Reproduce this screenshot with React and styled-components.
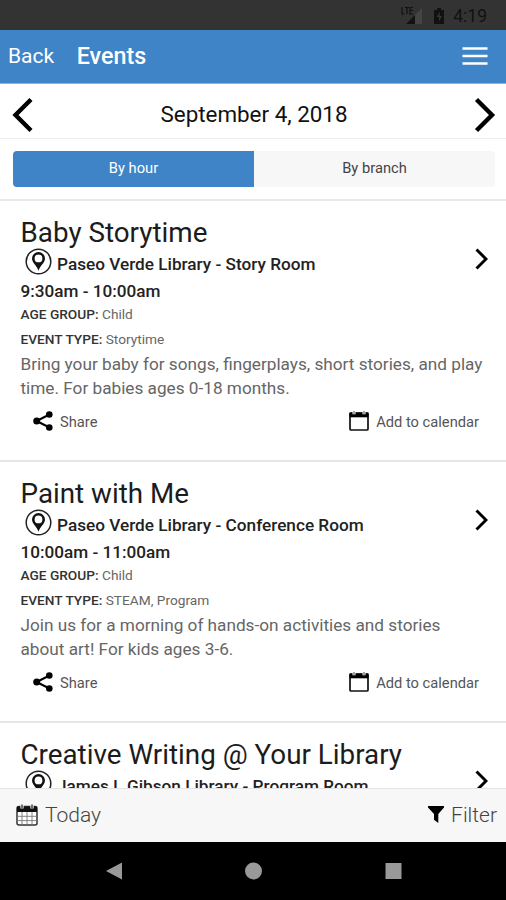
import React from "react";
import styled, { createGlobalStyle } from "styled-components";

const GlobalStyle = createGlobalStyle`
  * { box-sizing: border-box; }
  body { margin: 0; background: #fff; font-family: Roboto, "Liberation Sans", sans-serif; }
  svg { display: block; flex: none; }
  button { font: inherit; color: inherit; border: 0; background: none; padding: 0; }
`;

const Screen = styled.div`
  display: flex;
  flex-direction: column;
  width: 506px;
  height: 900px;
  overflow: hidden;
  background: #fff;
`;

const StatusBar = styled.div`
  flex: none;
  display: flex;
  align-items: center;
  justify-content: flex-end;
  height: 30px;
  padding: 2px 19px 0 0;
  background: #333;
  color: #111;
`;

const BatterySlot = styled.div`
  margin-left: 9px;
`;

const Clock = styled.span`
  margin-left: 8px;
  font-size: 17.5px;
  line-height: 28px;
`;

const Header = styled.header`
  flex: none;
  display: flex;
  align-items: center;
  height: 54px;
  padding: 1px 18px 2px 8px;
  background: #3f84c7;
  border-bottom: 1px solid #8fb5dd;
  color: #fff;
`;

const BackButton = styled.button`
  font-size: 21px;
  line-height: 26px;
`;

const PageTitle = styled.h1`
  flex: 1;
  margin: 0 0 0 22.5px;
  font-size: 23.3px;
  line-height: 26px;
  font-weight: 500;
`;

const DateBar = styled.div`
  flex: none;
  display: flex;
  align-items: center;
  justify-content: space-between;
  height: 55px;
  padding: 7px 10px 0 12px;
  border-bottom: 1px solid #ededed;
`;

const CurrentDate = styled.div`
  padding-bottom: 2px;
  font-size: 22.4px;
  line-height: 30px;
  color: #111;
`;

const SegmentBar = styled.div`
  flex: none;
  height: 62px;
  padding: 12px 11px 0 13px;
  border-bottom: 2px solid #e9e9e9;
`;

const Segments = styled.div`
  display: grid;
  grid-template-columns: 241px 241px;
  height: 36px;
  border-radius: 4px;
  overflow: hidden;
`;

const Segment = styled.button`
  font-size: 14.7px;
  line-height: 34px;
  padding-bottom: 2px;
  background: ${(p) => (p.$active ? "#3f84c7" : "#f7f7f7")};
  color: ${(p) => (p.$active ? "#fff" : "#444")};
`;

const EventList = styled.main`
  flex: 1;
  min-height: 0;
  overflow: hidden;
`;

const Card = styled.article`
  display: flex;
  flex-direction: column;
  height: 261px;
  padding: 15px 18px 0 20.5px;
  border-bottom: 2px solid #e6e6e6;
`;

const CardMain = styled.div`
  display: flex;
  align-items: flex-start;
  justify-content: space-between;
  height: 86px;
`;

const ChevronSlot = styled.div`
  padding-top: 31px;
`;

const EventTitle = styled.h2`
  margin: 0;
  font-size: 27.8px;
  line-height: 33px;
  font-weight: 400;
  color: #1c1c1c;
  white-space: nowrap;
`;

const Location = styled.div`
  display: flex;
  align-items: center;
  gap: 5.5px;
  height: 24px;
  padding-left: 4px;
  font-size: 17.2px;
  font-weight: 500;
  color: #222;
  white-space: nowrap;
`;

const LocationName = styled.span`
  padding-top: 5px;
`;

const Time = styled.div`
  font-size: 17.15px;
  line-height: 37px;
  font-weight: 500;
  color: #222;
`;

const Meta = styled.div`
  font-size: 13.7px;
  line-height: 24.5px;
  color: #666;
`;

const MetaLabel = styled.span`
  font-weight: 500;
  color: #333;
`;

const Description = styled.p`
  margin: 0;
  padding-top: 0.5px;
  font-size: 17.2px;
  line-height: 24.5px;
  color: #666;
  white-space: pre-line;
`;

const Actions = styled.div`
  display: flex;
  align-items: center;
  justify-content: space-between;
  height: 24px;
  margin-top: 8px;
  padding: 0 9px 0 12px;
`;

const Action = styled.button`
  display: flex;
  align-items: center;
  gap: 7.5px;
  font-size: 14.7px;
  line-height: 24px;
  color: #555;
`;

const ActionLabel = styled.span`
  padding-top: 3px;
`;

const Toolbar = styled.footer`
  flex: none;
  display: flex;
  align-items: center;
  justify-content: space-between;
  height: 54px;
  padding: 0 9px 2px 16px;
  background: #f7f7f7;
  border-top: 1px solid #e4e4e4;
`;

const ToolbarButton = styled.button`
  display: flex;
  align-items: center;
  gap: 7px;
  font-size: 21px;
  line-height: 28px;
  font-weight: 300;
  color: #444;
`;

const NavBar = styled.nav`
  flex: none;
  display: flex;
  align-items: center;
  justify-content: space-between;
  height: 58px;
  padding: 0 104.5px;
  background: #000;
`;

const SignalIcon = () => (
  <svg width="24" height="20" viewBox="0 0 24 20">
    <path d="M22 2v16H6z" fill="#444" />
    <path d="M15 9v9H6z" fill="#111" />
    <path d="M2 1v7h2.500M5 1.500h4M7 1.500V8M13 1.500h-3V8h3M10 4.500h3" fill="none" stroke="#111" strokeWidth="1.200" />
  </svg>
);

const BatteryIcon = () => (
  <svg width="12" height="18" viewBox="0 0 12 18">
    <path d="M1 3h3V1h4v2h3v14H1z" fill="#111" />
    <path d="M7 4.500 3.500 10H6v4.500L9 9H6.500z" fill="#333" />
  </svg>
);

const MenuIcon = () => (
  <svg width="26" height="20" viewBox="0 0 26 20">
    <path d="M.500 2.500h25M.500 10h25M.500 17.500h25" stroke="#fff" strokeWidth="2.700" />
  </svg>
);

const PreviousIcon = () => (
  <svg width="22" height="36" viewBox="0 0 22 36">
    <path d="M19 2.500 3.500 18 19 33.500" fill="none" stroke="#000" strokeWidth="4.400" />
  </svg>
);

const NextIcon = () => (
  <svg width="22" height="36" viewBox="0 0 22 36">
    <path d="M2.500 2.500 18 18 2.500 33.500" fill="none" stroke="#000" strokeWidth="4.400" />
  </svg>
);

const ChevronIcon = () => (
  <svg width="14" height="24" viewBox="0 0 14 24">
    <path d="M2.500 2.500l9.500 9.500-9.500 9.500" fill="none" stroke="#000" strokeWidth="2.900" />
  </svg>
);

const PinIcon = () => (
  <svg width="27" height="27" viewBox="0 0 27 27">
    <circle cx="13.500" cy="13.500" r="12.300" fill="none" stroke="#222" strokeWidth="1.500" />
    <path
      fillRule="evenodd"
      fill="#111"
      d="M13.500 4a6.500 6.500 0 0 0-6.500 6.500c0 4.300 5 7 6.500 12.300 1.500-5.300 6.500-8 6.500-12.300A6.500 6.500 0 0 0 13.500 4zm0 2.500a3.900 3.900 0 1 1 0 7.800 3.900 3.900 0 0 1 0-7.800z"
    />
  </svg>
);

const ShareIcon = () => (
  <svg width="20" height="20" viewBox="0 0 20 20">
    <path d="M16.500 3.500 3.500 10l13 6.500" fill="none" stroke="#000" strokeWidth="2.100" />
    <circle cx="16.300" cy="3.500" r="3.300" />
    <circle cx="3.700" cy="10" r="3.500" />
    <circle cx="16.300" cy="16.500" r="3.300" />
  </svg>
);

const CalendarIcon = () => (
  <svg width="20" height="20" viewBox="0 0 20 20">
    <rect x="1" y="2" width="18" height="17" rx="1" fill="#fff" stroke="#111" strokeWidth="1.700" />
    <path d="M.500 1.500h19V6.300H.500z" fill="#000" />
    <path d="M5 0v3.200M15 0v3.200" stroke="#fff" strokeWidth="3" />
    <path d="M5 0v3M15 0v3" stroke="#666" strokeWidth="1.200" />
  </svg>
);

const CalendarGridIcon = () => (
  <svg width="22" height="22" viewBox="0 0 22 22">
    <rect x="1" y="2.500" width="20" height="18.500" rx="2" fill="#fff" stroke="#333" strokeWidth="1.500" />
    <path d="M1 2.500h20V8H1z" fill="#111" />
    <path d="M6 8v13M11 8v13M16 8v13M1 12.300h20M1 16.600h20" stroke="#777" strokeWidth=".900" />
    <path d="M6 0v4.500M16 0v4.500" stroke="#f7f7f7" strokeWidth="3.200" />
    <path d="M6 .500v4M16 .500v4" stroke="#444" strokeWidth="1.500" />
  </svg>
);

const FilterIcon = () => (
  <svg width="16" height="17" viewBox="0 0 16 17">
    <path d="M0 0h16v1.500L10.300 8v9L6 13.700V8L0 1.500z" />
  </svg>
);

const NavBackIcon = () => (
  <svg width="18" height="18" viewBox="0 0 18 18">
    <path d="M17 .500v17L1 9z" fill="#999" />
  </svg>
);

const NavHomeIcon = () => (
  <svg width="18" height="18" viewBox="0 0 18 18">
    <circle cx="8.500" cy="9" r="8.500" fill="#999" />
  </svg>
);

const NavRecentIcon = () => (
  <svg width="17" height="18" viewBox="0 0 17 18">
    <path d="M.500 1h16v16H.500z" fill="#999" />
  </svg>
);

const events = [
  {
    title: "Baby Storytime",
    location: "Paseo Verde Library - Story Room",
    time: "9:30am - 10:00am",
    age: "Child",
    type: "Storytime",
    description:
      "Bring your baby for songs, fingerplays, short stories, and play\ntime. For babies ages 0-18 months.",
  },
  {
    title: "Paint with Me",
    location: "Paseo Verde Library - Conference Room",
    time: "10:00am - 11:00am",
    age: "Child",
    type: "STEAM, Program",
    description:
      "Join us for a morning of hands-on activities and stories\nabout art! For kids ages 3-6.",
  },
  {
    title: "Creative Writing @ Your Library",
    location: "James I. Gibson Library - Program Room",
  },
];

function EventCard({ event }) {
  return (
    <Card>
      <CardMain>
        <div>
          <EventTitle>{event.title}</EventTitle>
          <Location>
            <PinIcon />
            <LocationName>{event.location}</LocationName>
          </Location>
          {event.time && <Time>{event.time}</Time>}
        </div>
        <ChevronSlot>
          <ChevronIcon />
        </ChevronSlot>
      </CardMain>
      {event.description && (
        <>
          <Meta>
            <MetaLabel>AGE GROUP:</MetaLabel> {event.age}
          </Meta>
          <Meta>
            <MetaLabel>EVENT TYPE:</MetaLabel> {event.type}
          </Meta>
          <Description>{event.description}</Description>
          <Actions>
            <Action>
              <ShareIcon />
              <ActionLabel>Share</ActionLabel>
            </Action>
            <Action>
              <CalendarIcon />
              <ActionLabel>Add to calendar</ActionLabel>
            </Action>
          </Actions>
        </>
      )}
    </Card>
  );
}

export default function App() {
  return (
    <Screen>
      <GlobalStyle />
      <StatusBar>
        <SignalIcon />
        <BatterySlot>
          <BatteryIcon />
        </BatterySlot>
        <Clock>4:19</Clock>
      </StatusBar>
      <Header>
        <BackButton>Back</BackButton>
        <PageTitle>Events</PageTitle>
        <MenuIcon />
      </Header>
      <DateBar>
        <PreviousIcon />
        <CurrentDate>September 4, 2018</CurrentDate>
        <NextIcon />
      </DateBar>
      <SegmentBar>
        <Segments>
          <Segment $active>By hour</Segment>
          <Segment>By branch</Segment>
        </Segments>
      </SegmentBar>
      <EventList>
        {events.map((event) => (
          <EventCard key={event.title} event={event} />
        ))}
      </EventList>
      <Toolbar>
        <ToolbarButton>
          <CalendarGridIcon />
          Today
        </ToolbarButton>
        <ToolbarButton>
          <FilterIcon />
          Filter
        </ToolbarButton>
      </Toolbar>
      <NavBar>
        <NavBackIcon />
        <NavHomeIcon />
        <NavRecentIcon />
      </NavBar>
    </Screen>
  );
}
